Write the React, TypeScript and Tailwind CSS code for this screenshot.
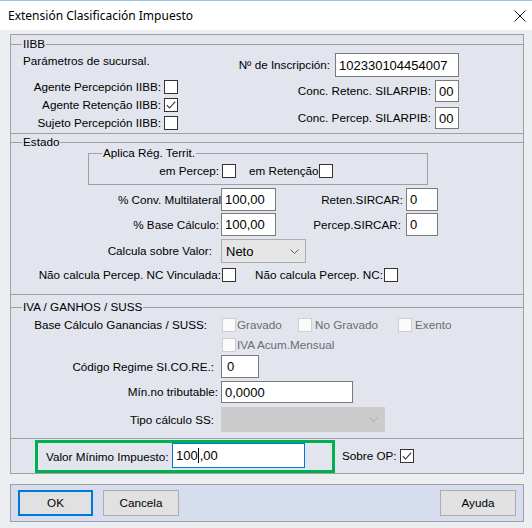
import React from "react";

const PANEL_BG = "bg-[#e2e5ed]";

function Box({ checked = false, disabled = false }: { checked?: boolean; disabled?: boolean }) {
  return (
    <span
      className={`flex h-[14px] w-[14px] shrink-0 items-center justify-center border ${
        disabled ? "border-[#cfcfcf] bg-[#fafafa]" : "border-[#333333] bg-white"
      }`}
    >
      {checked && (
        <svg width="12" height="12" viewBox="0 0 12 12">
          <path d="M1.8 6.2 L4.6 9 L10.2 2.6" fill="none" stroke="#333333" strokeWidth="1.1" />
        </svg>
      )}
    </span>
  );
}

function Edit({ value, className }: { value: string; className: string }) {
  return (
    <div className={`flex shrink-0 items-center border border-[#7a7a7a] bg-white pl-[3px] text-[13px] leading-none ${className}`}>
      {value}
    </div>
  );
}

function Combo({ value, className, disabled = false }: { value: string; className: string; disabled?: boolean }) {
  return (
    <div
      className={`flex shrink-0 items-center justify-between border pl-[4px] pr-[6px] text-[13px] leading-none ${
        disabled ? "border-[#cccccc] bg-[#cccccc]" : "border-[#adadad] bg-[#e5e5e5]"
      } ${className}`}
    >
      <span>{value}</span>
      <svg width="9" height="5" viewBox="0 0 9 5">
        <path d="M0.5 0.5 L4.5 4.5 L8.5 0.5" fill="none" stroke={disabled ? "#a8a8a8" : "#606060"} />
      </svg>
    </div>
  );
}

function Group({ title, className, children }: { title: string; className: string; children: React.ReactNode }) {
  return (
    <div className={`relative shrink-0 border-y border-[#a0a0a0] ${className}`}>
      <span className={`absolute left-[11px] top-[-8px] ${PANEL_BG} px-[1px] leading-[14px]`}>{title}</span>
      {children}
    </div>
  );
}

export default function App() {
  return (
    <div className="flex h-[528px] w-[532px] flex-col overflow-hidden bg-[#eceef2] font-['Liberation_Sans',Arial,sans-serif] text-[11.7px] leading-[14px] text-black">
      {/* Title bar */}
      <div className="flex h-[30px] shrink-0 items-center justify-between border-t border-[#9cc2ea] bg-white pl-[8px] pr-[6px]">
        <span className="font-['Noto_Sans',sans-serif] text-[12px]">Extensión Clasificación Impuesto</span>
        <svg width="12" height="12" viewBox="0 0 12 12">
          <path d="M0.5 0.5 L11.5 11.5 M11.5 0.5 L0.5 11.5" stroke="#111" strokeWidth="1" />
        </svg>
      </div>

      {/* Main panel */}
      <div className={`ml-[10px] mt-[4px] flex h-[440px] w-[514px] shrink-0 flex-col border border-[#a0a0a0] ${PANEL_BG} pt-[9px]`}>
        {/* IIBB */}
        <Group title="IIBB" className="flex h-[90px]">
          <div className="ml-[12px] flex w-[155px] flex-col">
            <span className="mt-[9px] whitespace-nowrap">Parámetros de sucursal.</span>
            <div className="mt-[10px] flex h-[18px] items-center justify-end gap-[3px] whitespace-nowrap">
              <span>Agente Percepción IIBB:</span>
              <Box />
            </div>
            <div className="flex h-[18px] items-center justify-end gap-[3px] whitespace-nowrap">
              <span>Agente Retenção IIBB:</span>
              <Box checked />
            </div>
            <div className="flex h-[18px] items-center justify-end gap-[3px] whitespace-nowrap">
              <span>Sujeto Percepción IIBB:</span>
              <Box />
            </div>
          </div>
          <div className="ml-auto mr-[64px] flex flex-col items-end whitespace-nowrap">
            <div className="mt-[8px] flex items-center gap-[5px]">
              <span>Nº de Inscripción:</span>
              <Edit value="102330104454007" className="h-[24px] w-[124px]" />
            </div>
            <div className="mt-[3px] flex items-center gap-[4px]">
              <span>Conc. Retenc. SILARPIB:</span>
              <Edit value="00" className="h-[22px] w-[24px]" />
            </div>
            <div className="mt-[5px] flex items-center gap-[4px]">
              <span>Conc. Percep. SILARPIB:</span>
              <Edit value="00" className="h-[22px] w-[24px]" />
            </div>
          </div>
        </Group>

        {/* Estado */}
        <Group title="Estado" className="mt-[8px] flex h-[153px] flex-col whitespace-nowrap">
          <div className="relative ml-[77px] mt-[10px] h-[32px] w-[340px] shrink-0 border border-[#a0a0a0]">
            <span className={`absolute left-[13px] top-[-8px] ${PANEL_BG} px-[1px]`}>Aplica Rég. Territ.</span>
            <div className="mt-[10px] flex h-[14px] items-center">
              <span className="w-[130px] text-right">em Percep:</span>
              <span className="ml-[3px]">
                <Box />
              </span>
              <span className="ml-[13px] w-[70px]">em Retenção</span>
              <Box />
            </div>
          </div>
          <div className="mt-[3px] flex h-[23px] items-center">
            <span className="w-[210px] text-right">% Conv. Multilateral</span>
            <Edit value="100,00" className="h-[23px] w-[55px]" />
            <span className="w-[127px] text-right">Reten.SIRCAR:</span>
            <Edit value="0" className="ml-[3px] h-[23px] w-[32px]" />
          </div>
          <div className="mt-[2px] flex h-[23px] items-center">
            <span className="w-[210px] pr-[2px] text-right">% Base Cálculo:</span>
            <Edit value="100,00" className="h-[23px] w-[55px]" />
            <span className="w-[127px] pr-[2px] text-right">Percep.SIRCAR:</span>
            <Edit value="0" className="ml-[3px] h-[23px] w-[32px]" />
          </div>
          <div className="mt-[3px] flex h-[24px] items-center">
            <span className="w-[210px] pr-[9px] text-right">Calcula sobre Valor:</span>
            <Combo value="Neto" className="h-[24px] w-[85px]" />
          </div>
          <div className="mt-[5px] flex h-[14px] items-center">
            <span className="w-[210px] text-right">Não calcula Percep. NC Vinculada:</span>
            <span className="ml-[1px]">
              <Box />
            </span>
            <span className="w-[147px] text-right">Não calcula Percep. NC:</span>
            <span className="ml-[1px]">
              <Box />
            </span>
          </div>
        </Group>

        {/* IVA / GANHOS / SUSS */}
        <Group title="IVA / GANHOS / SUSS" className="mt-[12px] flex h-[132px] flex-col whitespace-nowrap">
          <div className="mt-[10px] flex h-[14px] items-center">
            <span className="w-[210px] pr-[14px] text-right">Base Cálculo Ganancias / SUSS:</span>
            <div className="ml-[1px] flex w-[76px] items-center">
              <Box disabled />
              <span className="ml-[1px] text-[#6d6d6d]">Gravado</span>
            </div>
            <div className="flex w-[100px] items-center">
              <Box disabled />
              <span className="ml-[3px] text-[#6d6d6d]">No Gravado</span>
            </div>
            <div className="flex items-center">
              <Box disabled />
              <span className="ml-[3px] text-[#6d6d6d]">Exento</span>
            </div>
          </div>
          <div className="mt-[6px] flex h-[14px] items-center pl-[211px]">
            <Box disabled />
            <span className="ml-[1px] text-[#6d6d6d]">IVA Acum.Mensual</span>
          </div>
          <div className="mt-[3px] flex h-[23px] items-center">
            <span className="w-[210px] pr-[7px] text-right">Código Regime SI.CO.RE.:</span>
            <Edit value="0" className="h-[23px] w-[38px] pl-[5px]" />
          </div>
          <div className="mt-[3px] flex h-[22px] items-center">
            <span className="w-[210px] pr-[3px] text-right">Mín.no tributable:</span>
            <Edit value="0,0000" className="h-[22px] w-[132px] pl-[1px]" />
          </div>
          <div className="mt-[4px] flex h-[25px] items-center">
            <span className="w-[210px] pr-[7px] text-right">Tipo cálculo SS:</span>
            <Combo value="" disabled className="h-[25px] w-[164px]" />
          </div>
        </Group>

        {/* Valor mínimo */}
        <div className="flex h-[34px] shrink-0 items-end whitespace-nowrap">
          <div className="ml-[24px] flex h-[33px] w-[300px] items-start border-[3px] border-[#00b050] pl-[8px]">
            <span className="w-[122px] self-center">Valor Mínimo Impuesto:</span>
            <div className="ml-[4px] flex h-[25px] w-[133px] items-center border border-[#0078d7] bg-white pl-[3px] text-[13px] leading-none">
              <span>100</span>
              <span className="mx-[0.5px] h-[15px] w-[1px] bg-black" />
              <span>,00</span>
            </div>
          </div>
          <div className="mb-[10px] ml-[7px] flex items-center">
            <span className="w-[55px]">Sobre OP:</span>
            <span className="ml-[3px]">
              <Box checked />
            </span>
          </div>
        </div>
      </div>

      {/* Button bar */}
      <div className="ml-[10px] mt-[10px] flex h-[38px] w-[514px] shrink-0 items-start border border-[#a0a0a0] bg-[#d5ddef] px-[7px] pt-[5px]">
        <button className="h-[26px] w-[75px] border-2 border-[#0078d7] bg-[#e1e1e1]">OK</button>
        <button className="ml-[10px] h-[26px] w-[76px] border border-[#adadad] bg-[#e1e1e1]">Cancela</button>
        <button className="ml-auto h-[26px] w-[76px] border border-[#adadad] bg-[#e1e1e1]">Ayuda</button>
      </div>
    </div>
  );
}
